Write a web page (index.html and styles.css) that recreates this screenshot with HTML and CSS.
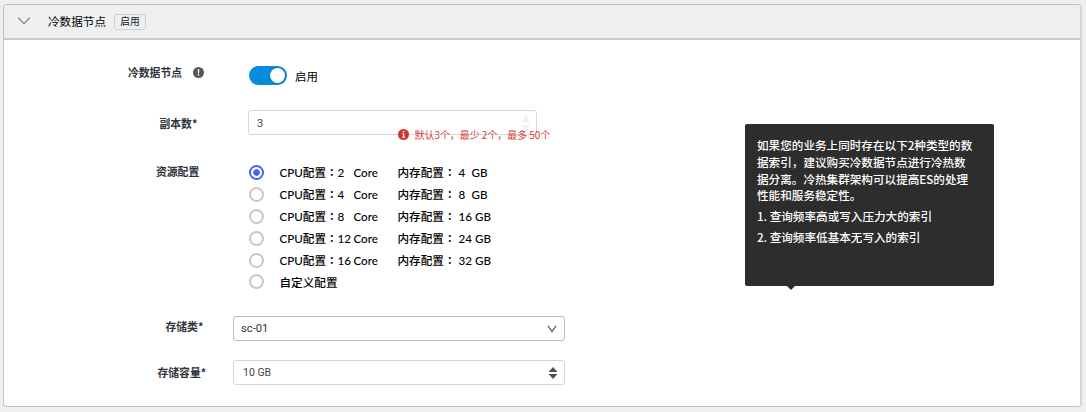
FILE: index.html
```
<!DOCTYPE html>
<html lang="zh-CN">
<head>
<meta charset="utf-8">
<title>冷数据节点</title>
<link rel="stylesheet" href="styles.css">
</head>
<body>
<section class="panel">
  <header class="panel-header">
    <svg class="collapse" width="14" height="8" viewBox="0 0 14 8"><path d="M1.2 .8 7 6.6 12.8 .8"/></svg>
    <h1 class="title">冷数据节点</h1>
    <span class="tag">启用</span>
  </header>
  <form class="form">
    <div class="row row-switch">
      <div class="label">冷数据节点
        <svg class="hint" width="11" height="11" viewBox="0 0 11 11"><circle cx="5.5" cy="5.5" r="5.5"/><path d="M4.7 2.2h1.6L6 6.2H5zM4.8 7.1h1.4v1.4H4.8z"/></svg>
      </div>
      <div class="switch"><span class="knob"></span></div>
      <span class="switch-text">启用</span>
    </div>
    <div class="row row-replica">
      <div class="label">副本数*</div>
      <div class="field replica"><span>3</span>
        <svg class="spin-light" width="8" height="18" viewBox="0 0 8 18"><path d="M4 0 7.5 7H.5zM4 17 7.5 10H.5z"/></svg>
        <div class="error">
          <svg width="11" height="11" viewBox="0 0 11 11"><circle cx="5.5" cy="5.5" r="5.5"/><path d="M4.8 1.9h1.5v1.4H4.8zM4.3 4.2h2v3.6h.7v.9H4.1v-.9h.8V5.1h-.6z"/></svg>
          <span>默认3个，最少 2个，最多 50个</span>
        </div>
      </div>
    </div>
    <div class="row row-resource">
      <div class="label">资源配置</div>
      <div class="options">
        <div class="option"><i class="radio checked"></i><span class="key">CPU配置<b class="colon" lang="zh-TW">：</b></span><span class="count">2</span><span class="core">Core</span><span class="memory">内存配置<b class="colon" lang="zh-TW">：</b></span><span class="size">4</span><span>GB</span></div>
        <div class="option"><i class="radio"></i><span class="key">CPU配置<b class="colon" lang="zh-TW">：</b></span><span class="count">4</span><span class="core">Core</span><span class="memory">内存配置<b class="colon" lang="zh-TW">：</b></span><span class="size">8</span><span>GB</span></div>
        <div class="option"><i class="radio"></i><span class="key">CPU配置<b class="colon" lang="zh-TW">：</b></span><span class="count">8</span><span class="core">Core</span><span class="memory">内存配置<b class="colon" lang="zh-TW">：</b></span><span class="size wide">16</span><span>GB</span></div>
        <div class="option"><i class="radio"></i><span class="key">CPU配置<b class="colon" lang="zh-TW">：</b></span><span class="count">12</span><span class="core">Core</span><span class="memory">内存配置<b class="colon" lang="zh-TW">：</b></span><span class="size wide">24</span><span>GB</span></div>
        <div class="option"><i class="radio"></i><span class="key">CPU配置<b class="colon" lang="zh-TW">：</b></span><span class="count">16</span><span class="core">Core</span><span class="memory">内存配置<b class="colon" lang="zh-TW">：</b></span><span class="size wide">32</span><span>GB</span></div>
        <div class="option"><i class="radio"></i><span>自定义配置</span></div>
      </div>
    </div>
    <div class="row row-class">
      <div class="label">存储类*</div>
      <div class="field select"><span>sc-01</span>
        <svg class="arrow" width="10" height="8" viewBox="0 0 10 8"><path d="M1 .8 5 6.5 9 .8"/></svg>
      </div>
    </div>
    <div class="row row-capacity">
      <div class="label">存储容量*</div>
      <div class="field capacity"><span>10 GB</span>
        <svg class="spin" width="10" height="12" viewBox="0 0 10 12"><path d="M5 0 9.5 5H.5zM5 12 9.5 7H.5z"/></svg>
      </div>
    </div>
  </form>
  <aside class="tooltip">
    <p>如果您的业务上同时存在以下2种类型的数<br>据索引，建议购买冷数据节点进行冷热数<br>据分离。冷热集群架构可以提高ES的处理<br>性能和服务稳定性。</p>
    <p>1. 查询频率高或写入压力大的索引</p>
    <p>2. 查询频率低基本无写入的索引</p>
  </aside>
</section>
</body>
</html>
```
FILE: styles.css
```
* { box-sizing: border-box; }
body {
  margin: 0;
  height: 412px;
  padding: 4px 4px 5px 3px;
  background: #eeeff1;
  color: #17191c;
  font: 500 11.5px/18px "Noto Sans CJK SC", sans-serif;
  overflow: hidden;
}
svg { flex: none; }
.panel {
  position: relative;
  height: 403px;
  border: 1px solid #bfc1c3;
  border-right: 2px solid #d4d6d9;
  border-radius: 4px;
  background: #fff;
}
.panel-header {
  display: flex;
  align-items: center;
  height: 35px;
  padding-left: 13px;
  border-bottom: 2px solid #c8c9cb;
  border-radius: 3px 3px 0 0;
  background: #eeeff1;
}
.collapse { fill: none; stroke: #85878a; stroke-width: 1.3; margin-top: -1px; }
.title { margin: -1px 0 0 17px; font-size: 11.6px; font-weight: 400; color: #000; }
.tag {
  width: 32px;
  height: 16px;
  margin-left: 8px;
  border: 1px solid #cdced6;
  border-radius: 3px;
  font-size: 9.7px;
  font-weight: 400;
  line-height: 13px;
  text-align: center;
}
.form { display: flex; flex-direction: column; }
.row { display: flex; align-items: flex-start; }
.label {
  display: flex;
  align-items: center;
  flex: none;
  height: 18px;
  font-size: 10.8px;
  font-weight: 700;
  color: #30333b;
  white-space: nowrap;
}
.row-switch { height: 70px; padding-top: 23px; }
.row-switch .label { width: 245px; padding-left: 124px; }
.hint { margin-left: 11px; fill: #555; }
.hint path { fill: #fff; }
.switch {
  display: flex;
  justify-content: flex-end;
  width: 38px;
  height: 19px;
  margin-top: 3px;
  padding: 2px;
  border-radius: 10px;
  background: #058ddd;
}
.knob { width: 15px; height: 15px; border-radius: 50%; background: #fff; box-shadow: 0 0 2px #05588c; }
.switch-text { margin: 4px 0 0 8px; font-size: 11.4px; font-weight: 400; color: #000; }
.row-replica { height: 53px; }
.row-replica .label { width: 244px; padding-left: 155.5px; margin-top: 4px; }
.field {
  display: flex;
  align-items: center;
  justify-content: space-between;
  height: 25px;
  border: 1px solid #d5d6de;
  border-radius: 3px;
  color: #444;
  font-family: Roboto, sans-serif;
  font-weight: 400;
}
.replica { position: relative; width: 289px; padding: 2px 6px 0 8px; font-size: 11px; }
.spin-light { fill: #eff0f0; }
.error {
  position: absolute;
  left: 149px;
  top: 15px;
  display: flex;
  align-items: center;
  gap: 5.5px;
  color: #d63b31;
  font: 400 9.95px/18px "Noto Sans CJK SC", sans-serif;
  white-space: nowrap;
}
.error svg { fill: #d4332a; margin-top: -2px; }
.error svg path { fill: #fff; }
.row-resource { height: 153px; }
.row-resource .label { width: 245px; padding-left: 152px; margin-top: -1px; }
.options { display: grid; grid-template-rows: repeat(4, 22.1px) 21.6px 22px; margin-top: -2px; color: #000; }
.option {
  display: flex;
  align-items: center;
  font: 500 11.6px/18px Lato, "Noto Sans CJK SC", sans-serif;
  white-space: nowrap;
}
.option span { padding-top: 2px; }
.radio {
  width: 15px;
  height: 15px;
  margin-right: 15.5px;
  border: 2px solid #c7c7c7;
  border-radius: 50%;
}
.checked { border-color: #4763f5; background: radial-gradient(circle, #4763f5 3px, #fff 3.5px); }
.colon { font-family: "Noto Sans CJK TC", sans-serif; font-weight: 500; line-height: 1; }
.key { width: 58px; }
.count { width: 16px; }
.core { width: 44px; }
.memory { width: 61px; }
.size { width: 13px; }
.size.wide { width: 16.5px; }
.row-class { height: 44px; }
.row-class .label { width: 229px; padding-left: 161.5px; margin-top: 1px; }
.select { width: 332px; padding: 0 7px; border-color: #b9bbbc; color: #28343b; font-size: 11.2px; }
.arrow { fill: none; stroke: #3c4a50; stroke-width: 1.1; }
.row-capacity .label { width: 229px; padding-left: 153.5px; margin-top: 3px; }
.capacity { width: 332px; padding: 0 6px 0 9px; font-size: 10.5px; }
.spin { fill: #505050; }
.tooltip {
  position: absolute;
  left: 741px;
  top: 119px;
  width: 249px;
  height: 162px;
  padding: 13px 12px;
  border-radius: 2px;
  background: #2d2d2d;
  color: #fff;
  font-size: 11.6px;
  font-weight: 500;
  line-height: 16.8px;
  white-space: nowrap;
}
.tooltip::after {
  content: "";
  position: absolute;
  left: 42px;
  top: 162px;
  border: 4px solid transparent;
  border-top-color: #2d2d2d;
  border-bottom: 0;
}
.tooltip p { margin: 0 0 4px; }
```
